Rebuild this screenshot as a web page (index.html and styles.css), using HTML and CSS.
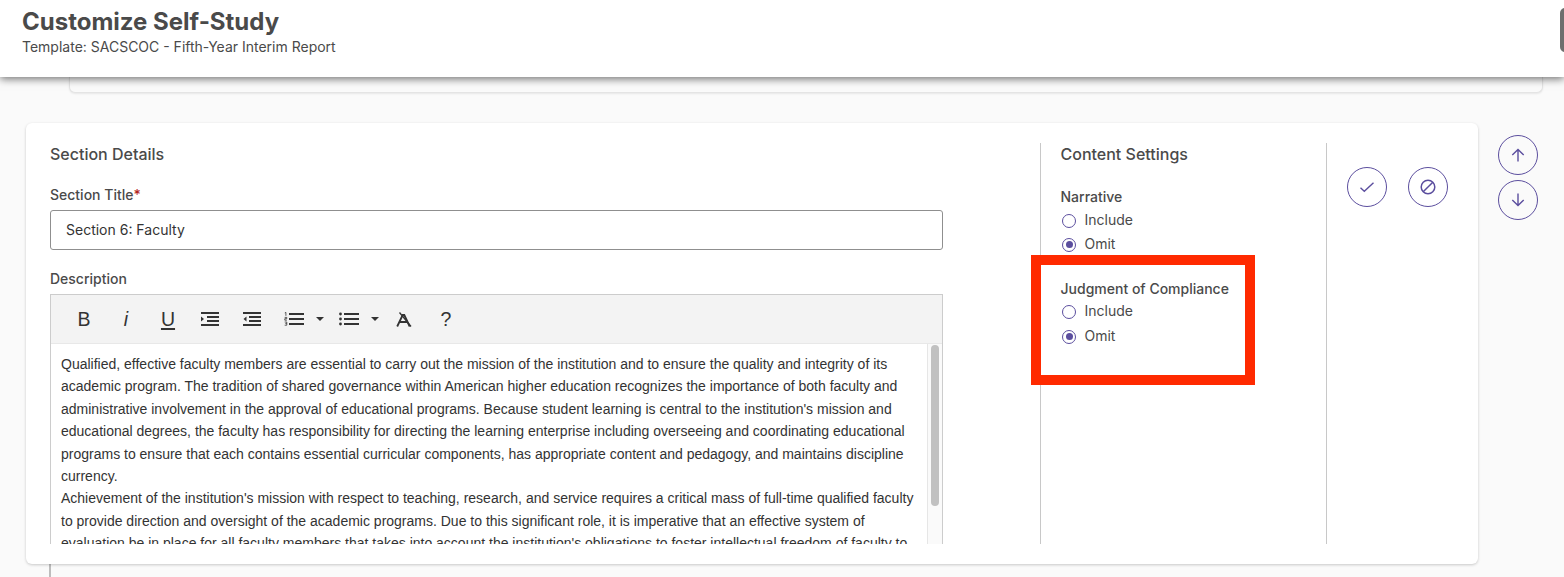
FILE: index.html
```html
<!DOCTYPE html>
<html lang="en">
<head>
<meta charset="utf-8">
<title>Customize Self-Study</title>
<link rel="stylesheet" href="styles.css">
</head>
<body>
<header class="top">
  <h1>Customize Self-Study</h1>
  <p>Template: SACSCOC - Fifth-Year Interim Report</p>
  <span class="edge-tab"></span>
</header>
<main class="page">
  <div class="prev-card"></div>
  <div class="row">
    <section class="card">
      <div class="col-details">
        <h2>Section Details</h2>
        <label class="field-label first">Section Title<span class="req">*</span></label>
        <div class="input">Section 6: Faculty</div>
        <label class="field-label second">Description</label>
        <div class="editor">
          <div class="toolbar">
            <span class="tb tb-b">B</span>
            <span class="tb tb-i">i</span>
            <span class="tb tb-u">U</span>
            <span class="tb"><svg width="18" height="14" viewBox="0 0 18 14"><path d="M0 1h18M6 5h12M6 9h12M0 13h18" stroke="#333" stroke-width="2" fill="none"/><path d="M0 4.500l3 2.500-3 2.500z" fill="#333"/></svg></span>
            <span class="tb"><svg width="18" height="14" viewBox="0 0 18 14"><path d="M0 1h18M6 5h12M6 9h12M0 13h18" stroke="#333" stroke-width="2" fill="none"/><path d="M3.500 4.500L.5 7l3 2.500z" fill="#333"/></svg></span>
            <span class="tb-drop">
              <svg class="ic" width="20" height="14" viewBox="0 0 20 14"><path d="M5 2h15M5 7h15M5 12h15" stroke="#333" stroke-width="2" fill="none"/><path d="M.8 .9L1.900.4V3.800M.7 5.400h2.100v1.300H.8v1.500h2.100M.7 10h2.100v1.500H1.400M2.800 11.500v1.700H.7" stroke="#333" stroke-width=".8" fill="none"/></svg>
              <svg class="caret" width="8" height="4" viewBox="0 0 8 4"><path d="M0 0h8L4 4z" fill="#333"/></svg>
            </span>
            <span class="tb-drop">
              <svg class="ic" width="20" height="14" viewBox="0 0 20 14"><path d="M5 2h15M5 7h15M5 12h15" stroke="#333" stroke-width="2" fill="none"/><circle cx="1.500" cy="2" r="1.400" fill="#333"/><circle cx="1.500" cy="7" r="1.400" fill="#333"/><circle cx="1.500" cy="12" r="1.400" fill="#333"/></svg>
              <svg class="caret" width="8" height="4" viewBox="0 0 8 4"><path d="M0 0h8L4 4z" fill="#333"/></svg>
            </span>
            <span class="tb"><svg width="16" height="15" viewBox="0 0 16 15"><path d="M1.200 14.500L6.700 3h1.600l5.400 11.500M3.800 10h7.400" stroke="#333" stroke-width="1.800" fill="none"/><path d="M3.500 .5L15 14.500" stroke="#333" stroke-width="1.300"/></svg></span>
            <span class="tb tb-q">?</span>
          </div>
          <div class="editor-body">
            <div class="editor-text">
              <p>Qualified, effective faculty members are essential to carry out the mission of the institution and to ensure the quality and integrity of its academic program. The tradition of shared governance within American higher education recognizes the importance of both faculty and administrative involvement in the approval of educational programs. Because student learning is central to the institution's mission and educational degrees, the faculty has responsibility for directing the learning enterprise including overseeing and coordinating educational programs to ensure that each contains essential curricular components, has appropriate content and pedagogy, and maintains discipline currency.</p>
              <p>Achievement of the institution's mission with respect to teaching, research, and service requires a critical mass of full-time qualified faculty to provide direction and oversight of the academic programs. Due to this significant role, it is imperative that an effective system of evaluation be in place for all faculty members that takes into account the institution's obligations to foster intellectual freedom of faculty to</p>
            </div>
            <div class="scrollbar"><span class="thumb"></span></div>
          </div>
        </div>
      </div>
      <div class="col-settings">
        <h2>Content Settings</h2>
        <div class="group group-narrative">
          <div class="group-title">Narrative</div>
          <div class="radio"><span class="dot"></span>Include</div>
          <div class="radio r2"><span class="dot on"></span>Omit</div>
        </div>
        <div class="group group-judgment">
          <div class="group-title">Judgment of Compliance</div>
          <div class="radio r1"><span class="dot"></span>Include</div>
          <div class="radio r3"><span class="dot on"></span>Omit</div>
        </div>
      </div>
      <div class="col-actions">
        <button class="round" aria-label="Include"><svg width="16" height="16" viewBox="0 0 16 16"><path d="M1.500 8.800l3.800 3.400L14.500 3.800" stroke="#5b4e9e" stroke-width="1.400" fill="none"/></svg></button>
        <button class="round" aria-label="Omit"><svg width="16" height="16" viewBox="0 0 16 16"><circle cx="8" cy="8" r="6.800" stroke="#5b4e9e" stroke-width="1.500" fill="none"/><path d="M3.200 12.800l9.600-9.600" stroke="#5b4e9e" stroke-width="1.500"/></svg></button>
      </div>
    </section>
    <div class="moves">
      <button class="round" aria-label="Move up"><svg width="16" height="16" viewBox="0 0 16 16"><path d="M8 14.500V2.500M2.300 8L8 2.500 13.700 8" stroke="#5b4e9e" stroke-width="1.400" fill="none"/></svg></button>
      <button class="round" aria-label="Move down"><svg width="16" height="16" viewBox="0 0 16 16"><path d="M8 1.500v12M2.300 8L8 13.500 13.700 8" stroke="#5b4e9e" stroke-width="1.400" fill="none"/></svg></button>
    </div>
  </div>
  <div class="rail"></div>
</main>
<div class="highlight"></div>
</body>
</html>
```
FILE: styles.css
```css
* { box-sizing: border-box; }
html, body { margin: 0; padding: 0; height: 577px; overflow: hidden; }
body { background: #fafafa; font-family: Inter, "Liberation Sans", sans-serif; color: #444; position: relative; }

.top { position: relative; z-index: 2; height: 77px; background: #fff; padding: 7px 22px 0; box-shadow: 0 2px 8px rgba(0,0,0,.55); }
.top h1 { margin: 0; font-size: 24px; line-height: 29px; font-weight: 700; color: #4a4a4a; }
.top p { margin: 2px 0 0; font-size: 14px; line-height: 17px; color: #4a4a4a; }
.edge-tab { position: absolute; right: -8px; top: 8px; width: 12px; height: 44px; background: #6e6e6e; border-radius: 5px; }

.page { position: relative; height: 500px; }
.prev-card { margin: 0 21px 0 69px; height: 16px; background: #fafafa; border: 1px solid #e4e4e4; border-top: 0; border-radius: 0 0 6px 6px; box-shadow: 0 1px 2px rgba(0,0,0,.08); }

.row { display: flex; margin: 30px 0 0 26px; align-items: flex-start; }
.card { width: 1452px; height: 441px; background: #fff; border-radius: 6px; box-shadow: 0 1px 3px rgba(0,0,0,.2); padding: 20px 0 20px 24px; display: flex; position: relative; z-index: 1; }

.col-details { width: 990px; padding-right: 97px; }
h2 { margin: 0; font-size: 16px; line-height: 22px; font-weight: 500; color: #4a4a4a; }
.field-label { display: block; font-size: 14px; line-height: 17px; font-weight: 500; color: #4a4a4a; }
.field-label.first { margin-top: 21px; }
.field-label.second { margin-top: 20px; }
.req { color: #b3261e; }
.input { margin-top: 7px; height: 40px; border: 1px solid #8f8f8f; border-radius: 3px; padding: 0 15px; font-size: 14px; line-height: 38px; color: #333; }

.editor { margin-top: 7px; height: 250px; border: 1px solid #ccc; border-bottom: 0; overflow: hidden; display: flex; flex-direction: column; font-family: "Liberation Sans", Arial, sans-serif; }
.toolbar { height: 49px; flex: none; background: #f3f3f3; border-bottom: 1px solid #e8e8e8; display: flex; align-items: center; padding: 0 0 0 12px; color: #333; }
.tb { width: 42px; flex: none; display: flex; align-items: center; justify-content: center; font-size: 19.500px; line-height: 22px; color: #333; }
.tb-i { font-style: italic; }
.tb-u { text-decoration: underline; text-decoration-thickness: 2px; text-underline-offset: 2px; }
.tb-drop { width: 55px; flex: none; display: flex; align-items: center; padding-left: 11px; }
.ic { display: block; flex: none; }
.caret { display: block; flex: none; margin: 0 0 0 12px; }

.editor-body { flex: 1; min-height: 0; display: flex; }
.editor-text { flex: 1; min-width: 0; padding: 9px 10px 0; font-size: 14px; line-height: 22.4px; color: #333; overflow: hidden; }
.editor-text p { margin: 0; }
.scrollbar { width: 15px; flex: none; border-left: 1px solid #e6e6e6; padding: 1px 3px 0 3px; background: #fafafa; }
.thumb { display: block; height: 161px; background: #c1c1c1; border-radius: 4px; }

.col-settings { width: 286px; height: 401px; border-left: 1px solid #c8c8c8; padding-left: 19.500px; position: relative; }
.group-title { font-size: 14px; line-height: 17px; font-weight: 500; color: #4a4a4a; }
.group-narrative { margin-top: 23px; }
.group-judgment { margin-top: 28px; }
.radio { display: flex; align-items: center; font-size: 14px; line-height: 17px; color: #4a4a4a; margin-top: 6px; height: 17px; }
.radio.r1 { margin-top: 5px; }
.radio.r2 { margin-top: 7px; }
.radio.r3 { margin-top: 8px; }
.dot { width: 14px; height: 14px; margin: 2px 8.500px 0 1.500px; border: 1px solid #5b4e9e; border-radius: 50%; flex: none; background: #fff; position: relative; }
.dot.on::after { content: ""; position: absolute; inset: 2.500px; border-radius: 50%; background: #5b4e9e; }

.col-actions { border-left: 1px solid #c8c8c8; height: 401px; padding: 24px 0 0 20px; display: flex; gap: 21px; align-items: flex-start; flex: 1; }
.round { width: 40px; height: 40px; padding: 0; background: transparent; border: 1px solid #5b4e9e; border-radius: 50%; display: flex; align-items: center; justify-content: center; flex: none; }
.moves { margin: 12px 0 0 20px; display: flex; flex-direction: column; gap: 5px; }

.rail { position: absolute; left: 49px; top: 487px; width: 2px; height: 20px; background: #bdbdbd; }
.highlight { position: absolute; left: 1031px; top: 255px; width: 224px; height: 130px; border: 10px solid #ff2a00; z-index: 3; }
```
